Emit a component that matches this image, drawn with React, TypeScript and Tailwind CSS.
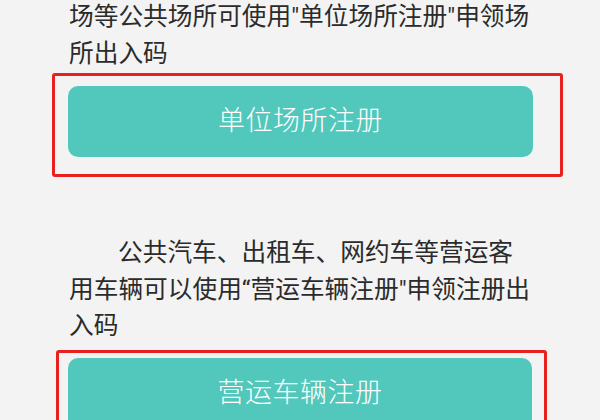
export default function App() {
  const font = { fontFamily: 'Roboto, "Noto Sans CJK SC", sans-serif' };

  return (
    <div
      className="w-[600px] h-[420px] overflow-hidden bg-[#f3f3f3] text-[#2b2b2b]"
      style={font}
    >
      <div className="pl-[69px]">
        {/* first paragraph, cut off at the top */}
        <p className="mt-[-2px] text-[24.7px] leading-[37px] whitespace-nowrap">
          场等公共场所可使用"单位场所注册"申领场
          <br />
          所出入码
        </p>
      </div>

      <div className="ml-[52px] mt-[1px] w-[511px] border-[3px] border-[#e8211f] rounded-[3px] pl-[13px] pr-[27px] pt-[10px] pb-[17px]">
        <button className="w-full h-[71px] rounded-[10px] bg-[#52c8bc] text-white text-[27px] tracking-[0.5px] font-light flex items-center justify-center">
          单位场所注册
        </button>
      </div>

      <div className="pl-[69px] mt-[58px]">
        <p className="text-[24.7px] leading-[36.5px] whitespace-nowrap">
          <span className="pl-[49px]">公共汽车、出租车、网约车等营运客</span>
          <br />
          用车辆可以使用“营运车辆注册"申领注册出
          <br />
          入码
        </p>
      </div>

      <div className="ml-[56px] mt-[5px] w-[491px] border-[3px] border-[#e8211f] rounded-[3px] pl-[9px] pr-[12px] pt-[5px] pb-[18px]">
        <button className="w-full h-[71px] rounded-[10px] bg-[#52c8bc] text-white text-[27px] tracking-[0.5px] font-light flex items-center justify-center">
          营运车辆注册
        </button>
      </div>
    </div>
  );
}
